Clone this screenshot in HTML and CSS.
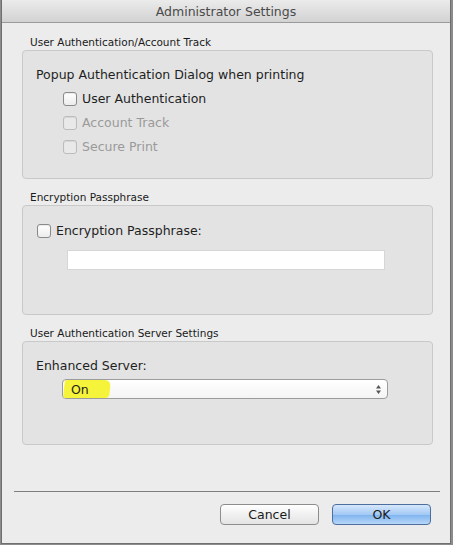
FILE: index.html
```html
<!DOCTYPE html>
<html>
<head>
<meta charset="utf-8">
<link rel="stylesheet" href="styles.css">
</head>
<body>
<div class="window">
  <div class="titlebar">Administrator Settings</div>
  <div class="content">
    <div class="group">
      <div class="group-label">User Authentication/Account Track</div>
      <div class="box box-auth">
        <div class="line">Popup Authentication Dialog when printing</div>
        <div class="checks">
          <label class="check"><span class="cb"></span><span>User Authentication</span></label>
          <label class="check disabled"><span class="cb"></span><span>Account Track</span></label>
          <label class="check disabled"><span class="cb"></span><span>Secure Print</span></label>
        </div>
      </div>
    </div>
    <div class="group">
      <div class="group-label">Encryption Passphrase</div>
      <div class="box box-enc">
        <label class="check"><span class="cb"></span><span>Encryption Passphrase:</span></label>
        <div class="input"></div>
      </div>
    </div>
    <div class="group">
      <div class="group-label">User Authentication Server Settings</div>
      <div class="box box-server">
        <div class="line">Enhanced Server:</div>
        <div class="select">
          <span class="highlight"></span>
          <span class="value">On</span>
          <svg class="arrows" width="7" height="11" viewBox="0 0 7 11"><path d="M3.5 1 L6 4.5 L1 4.5 Z M3.5 10 L6 6.5 L1 6.5 Z" fill="#555"/></svg>
        </div>
      </div>
    </div>
  </div>
  <div class="footer">
    <div class="separator"></div>
    <div class="buttons">
      <div class="btn">Cancel</div>
      <div class="btn btn-default">OK</div>
    </div>
  </div>
</div>
</body>
</html>
```

FILE: styles.css
```css
html, body {
  margin: 0;
  padding: 0;
}
body {
  background: #8c8c8c;
  width: 453px;
  height: 545px;
  overflow: hidden;
  font-family: "DejaVu Sans", "Liberation Sans", sans-serif;
  color: #1e1e1e;
}
.window {
  margin-left: 1px;
  width: 450px;
  height: 544px;
  box-sizing: border-box;
  border: 1px solid #6f6f6f;
  border-top: none;
  background: #ececec;
  display: flex;
  flex-direction: column;
}
.titlebar {
  height: 22px;
  line-height: 23px;
  border-bottom: 1px solid #9a9a9a;
  background: linear-gradient(#ebebeb, #d2d2d2);
  text-align: center;
  font-size: 12.5px;
  color: #4a4a4a;
}
.content {
  padding: 12px 17px 0 20px;
  display: flex;
  flex-direction: column;
  gap: 11px;
}
.group-label {
  font-size: 10.5px;
  line-height: 14px;
  height: 14px;
  padding-left: 8px;
  margin-bottom: 1px;
  color: #1a1a1a;
}
.box {
  box-sizing: border-box;
  background: #e3e3e3;
  border: 1px solid #c9c9c9;
  border-radius: 4px;
}
.box-auth {
  height: 129px;
  padding: 16px 0 0 13px;
}
.line {
  font-size: 12.5px;
  line-height: 16px;
}
.checks {
  display: flex;
  flex-direction: column;
  gap: 8px;
  margin-top: 8px;
  padding-left: 27px;
}
.check {
  display: flex;
  align-items: center;
  gap: 5px;
  font-size: 12.5px;
  line-height: 16px;
}
.cb {
  width: 12px;
  height: 12px;
  border: 1px solid #8a8a8a;
  border-radius: 3px;
  background: linear-gradient(#ffffff, #ececec);
  box-shadow: inset 0 1px 1px rgba(0,0,0,0.08);
}
.disabled {
  color: #9a9a9a;
}
.disabled .cb {
  border-color: #bcbcbc;
  background: #e9e9e9;
}
.box-enc {
  height: 110px;
  padding: 17px 0 0 14px;
}
.input {
  margin: 11px 0 0 30px;
  width: 318px;
  height: 20px;
  background: #ffffff;
  border: 1px solid #d6d6d6;
  box-sizing: border-box;
}
.box-server {
  height: 104px;
  padding: 16px 0 0 13px;
}
.select {
  position: relative;
  margin: 5px 0 0 26px;
  width: 326px;
  height: 20px;
  box-sizing: border-box;
  border: 1px solid #9c9c9c;
  border-radius: 4px;
  background: linear-gradient(#ffffff, #f4f4f4);
  display: flex;
  align-items: center;
  font-size: 12.5px;
}
.highlight {
  position: absolute;
  left: 1px;
  top: 0px;
  width: 46px;
  height: 18px;
  background: #f6f43a;
  border-radius: 2px 6px 4px 2px;
  transform: skewX(-6deg);
}
.value {
  position: relative;
  padding-left: 8px;
  flex: 1;
}
.arrows {
  margin-right: 5px;
}
.footer {
  margin-top: auto;
  padding-bottom: 18px;
}
.separator {
  margin: 0 10px 0 12px;
  height: 1px;
  background: #7e7e7e;
}
.buttons {
  display: flex;
  justify-content: flex-end;
  gap: 13px;
  padding: 12px 19px 0 0;
}
.btn {
  width: 99px;
  height: 21px;
  box-sizing: border-box;
  border: 1px solid #8d8d8d;
  border-radius: 4px;
  background: linear-gradient(#ffffff, #f0f0f0 50%, #e4e4e4);
  font-size: 12.5px;
  line-height: 19px;
  text-align: center;
  color: #1a1a1a;
}
.btn-default {
  border-color: #4e6f9e;
  background: linear-gradient(#d7e8fc, #a3c9f4 50%, #7db3ef 51%, #b7d7f8);
}
```
